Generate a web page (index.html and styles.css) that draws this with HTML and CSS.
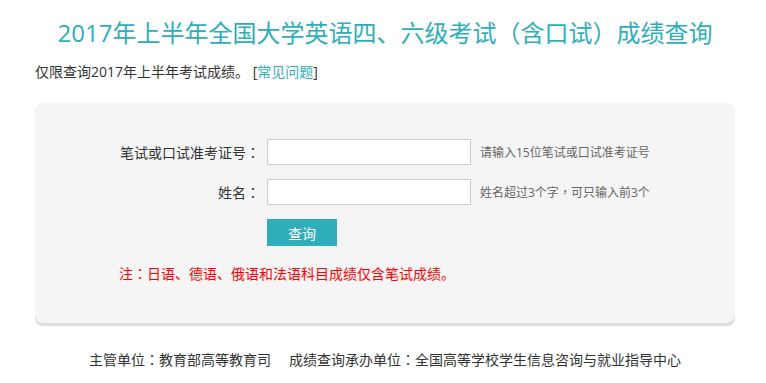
FILE: index.html
```html
<!DOCTYPE html>
<html>
	<head>
		<meta charset="utf-8" />
		<title>成绩查询</title>
		<link rel="stylesheet" href="styles.css">
	</head>
	<body>
		<div class="page">
			<h1 class="title">2017年上半年全国大学英语四、六级考试<span class="punct">（</span>含口试<span class="punct">）</span>成绩查询</h1>
			<p class="tip">仅限查询2017年上半年考试成绩。 [<a class="link" href="#">常见问题</a>]</p>

			<div class="panel">
				<div class="form">
					<label class="label" for="zkzh">笔试或口试准考证号<span class="punct">：</span></label>
					<input id="zkzh" class="input" type="text" />
					<span class="hint">请输入15位笔试或口试准考证号</span>

					<label class="label" for="xm">姓名<span class="punct">：</span></label>
					<input id="xm" class="input" type="text" />
					<span class="hint">姓名超过3个字<span class="punct">，</span>可只输入前3个</span>

					<span></span>
					<div><button class="button">查询</button></div>
					<span></span>
				</div>
				<p class="note">注<span class="punct">：</span>日语、德语、俄语和法语科目成绩仅含笔试成绩。</p>
			</div>

			<p class="footer">主管单位<span class="punct">：</span>教育部高等教育司&nbsp;&nbsp;&nbsp;&nbsp;&nbsp;成绩查询承办单位<span class="punct">：</span>全国高等学校学生信息咨询与就业指导中心</p>
		</div>
	</body>
</html>
```

FILE: styles.css
```css
html {
	height: 100%;
}
body {
	margin: 0;
	background-color: #fff;
	color: #333;
	font-family: "Open Sans", "Noto Sans CJK SC", sans-serif;
	font-size: 14px;
}
.page {
	width: 700px;
	margin: 0 auto;
	padding-left: 4px;
}
.title {
	margin: 0;
	padding-top: 16px;
	height: 32px;
	line-height: 32px;
	text-align: center;
	font-size: 24px;
	font-weight: normal;
	color: #2eaebb;
	white-space: nowrap;
}
.punct {
	font-family: "Noto Sans CJK TC", sans-serif;
}
.tip {
	margin: 14px 0 0 0;
	line-height: 20px;
}
.link {
	color: #2eaebb;
	text-decoration: none;
}
.panel {
	margin-top: 21px;
	background-color: #f5f5f5;
	border-radius: 8px;
	box-shadow: 0 3px 0 #dcdcdc;
	padding: 36px 0 39px 0;
}
.form {
	display: grid;
	grid-template-columns: 225px 204px auto;
	column-gap: 7px;
	row-gap: 14px;
	align-items: center;
}
.label {
	text-align: right;
	line-height: 20px;
}
.input {
	box-sizing: border-box;
	width: 204px;
	height: 26px;
	margin: 0;
	border: 1px solid #ccc;
	background-color: #fff;
	padding: 0 4px;
}
.hint {
	margin-left: 2px;
	font-size: 12px;
	color: #666;
}
.button {
	display: block;
	width: 70px;
	height: 27px;
	border: none;
	background-color: #2eaebb;
	color: #fff;
	font-family: inherit;
	font-size: 14px;
	cursor: pointer;
}
.note {
	margin: 17px 0 0 84px;
	line-height: 20px;
	color: #f00;
}
.footer {
	margin: 26px 0 0 0;
	line-height: 20px;
	text-align: center;
}
```
